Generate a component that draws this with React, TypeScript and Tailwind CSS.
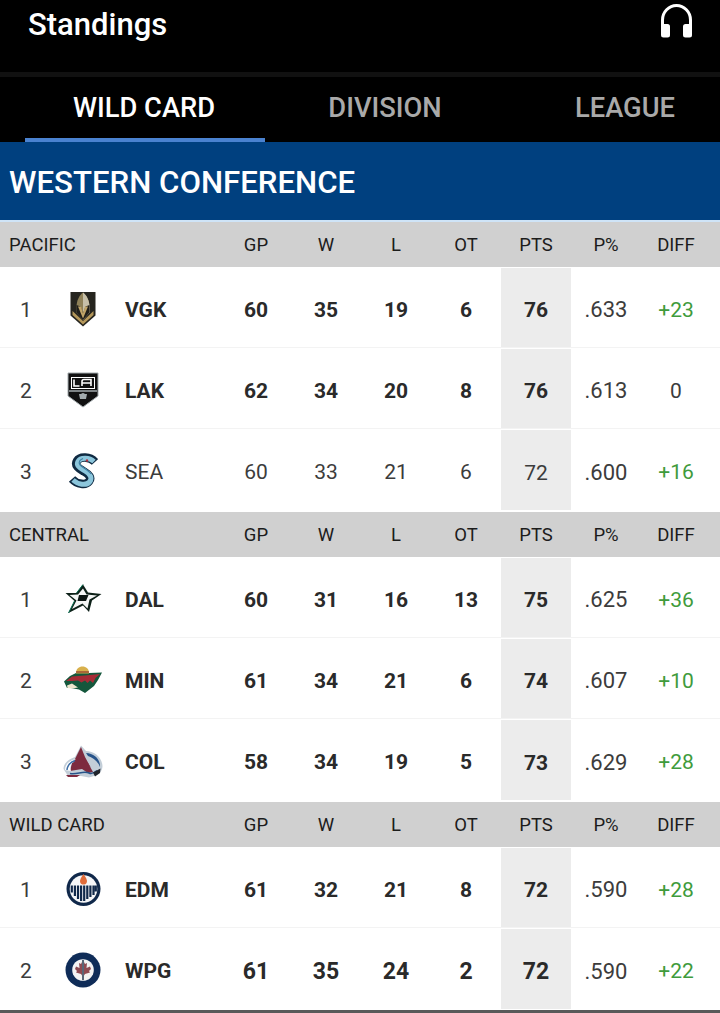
import React from "react";

const VGK = () => (
  <svg width="26" height="36" viewBox="0 0 26 36">
    <path d="M0.500 1H25.500V24.500L13 35.500 0.500 24.500Z" fill="#26251f" />
    <path d="M2.500 20V24L13 33.500 23.500 24V20L13 30Z" fill="#b4975a" />
    <path d="M13 1.500C9 4.500 6.500 10 6.500 16V21.500L13 29 19.500 21.500V16C19.500 10 17 4.500 13 1.500Z" fill="#8f8158" />
    <path d="M13 1.500C17 4.500 19.500 10 19.500 16V21.500L13 29Z" fill="#c6bfa8" />
    <path d="M6.500 14 10.500 15.500 13 22.500 15.500 15.500 19.500 14V21.500L13 29 6.500 21.500Z" fill="#1f1e1a" />
    <path d="M8 15.500H11L13 22.500 15 15.500H18L13 27.500Z" fill="#c0a468" />
  </svg>
);
const LAK = () => (
  <svg width="32" height="36" viewBox="0 0 32 36">
    <path d="M1 1H31V24L16 35 1 24Z" fill="#111" stroke="#a2aaad" strokeWidth="1" />
    <path d="M4 5H28V17H4Z" fill="#fff" />
    <path d="M5 6H27V16H5Z" fill="#111" />
    <path d="M7 7.500V14H12.500M15 14V9.500Q15 7.500 17 7.500H24V14M15 11H24" fill="none" stroke="#fff" strokeWidth="1.600" />
    <path d="M2 19H30" stroke="#a2aaad" strokeWidth="1.500" />
    <path d="M12 22H20L19 27H13Z" fill="#a2aaad" />
    <circle cx="16" cy="23" r="2" fill="#a2aaad" />
  </svg>
);
const SEA = () => (
  <svg width="30" height="37" viewBox="0 0 30 37">
    <path d="M27 9C22 3.500 12 3 9 8 6 13 12 16 16 18.500 21 21.500 24 24.500 21 28.500 18 32.500 9 31.500 4 26" fill="none" stroke="#0f2a42" strokeWidth="8.500" />
    <path d="M26 8.500C21.500 4.500 12.500 4 10 8.500 7.500 13 13 15.500 17 18 22 21 25 25 21.500 29 18 33 10 31.500 5 27" fill="none" stroke="#8cc6dc" strokeWidth="5" />
    <path d="M15 5.500C12 6.500 10 9 12 12 14 14.500 20 17 23 21" fill="none" stroke="#3d7fa3" strokeWidth="1.200" />
    <circle cx="19" cy="7.500" r="1.200" fill="#b3313f" />
  </svg>
);
const DAL = () => (
  <svg width="37" height="30" viewBox="0 0 37 30">
    <path d="M18 0.500 23 8.500 36.500 10 27 16.500 24 28 18 21.500 3.500 29 9.500 17 0.500 9 11.500 9Z" fill="#0d2018" />
    <path d="M18 4.500 21.500 10.500 32 11.500 24.500 15.500 22.500 24.500 17.500 19.500 7 25 11.500 16.500 4.500 11 13 10.500Z" fill="#f4f6f5" />
    <path d="M14 11H23.500L21 17H12.500Z" fill="#0b1512" />
    <path d="M3.500 29 9.500 17M18 0.500 11.500 9" stroke="#00684a" strokeWidth="1" />
  </svg>
);
const MIN = () => (
  <svg width="40" height="28" viewBox="0 0 40 28">
    <path d="M1 15.500 7 10 13 7H26L39 6.500 35 14 31 20 22 27 16 23.500 8 22 4 22Z" fill="#14573c" />
    <path d="M13 7.500C13 2.500 16 0.500 19.500 0.500 23 0.500 26 2.500 26 7.500Z" fill="#d8b04c" />
    <path d="M13 6H26" stroke="#8b3a2a" strokeWidth="1.200" />
    <path d="M3 15 9 10.500 22 9.500 37 8 32.500 12 30 17 27 14.500 24.500 17 22 14.500 18.500 16.500 15 14.500 9 15Z" fill="#a62b36" />
    <path d="M4 19.500 9 17.500 15 21.500 9 22.500 4.500 22Z" fill="#efe6ce" />
  </svg>
);
const COL = () => (
  <svg width="40" height="33" viewBox="0 0 40 33">
    <path d="M0.500 24C0.500 18 6 14 12 12L18 0.500 23 6C31 6 39 12 39.500 21 39.500 26 36 30 31 31L26 32.500 18 31 5 31Z" fill="#c3ced8" />
    <path d="M18 2 10 18 24 18 28 23 22 12Z" fill="#7d2b3f" />
    <path d="M9 18H25L30 27 25 28 19 24 7 26Z" fill="#7d2b3f" />
    <path d="M2 25C2 19 7 15 13 14 8 18 6.500 22 8 26Z" fill="#fff" />
    <path d="M4 25C4.500 20 8 17 12 15.500" stroke="#3e6fa6" strokeWidth="1.500" fill="none" />
    <path d="M23 8C31 8.500 37.500 14 37 22 35 16.500 30 12.500 25 11Z" fill="#27548a" />
    <path d="M7 28.500C14 30 20 25.500 26 28 28 29 30 29 34 25.500" stroke="#27548a" strokeWidth="1.500" fill="none" />
    <path d="M30 27.500 37.500 23.500 37 28 32 31.500Z" fill="#20242b" />
    <path d="M3 30H17L14 32H5Z" fill="#7d2b3f" />
  </svg>
);
const EDM = () => (
  <svg width="35" height="36" viewBox="0 0 35 36">
    <circle cx="17.500" cy="18" r="17" fill="#10284a" />
    <circle cx="17.500" cy="18" r="13.800" fill="#f5f6f8" />
    <path d="M17.500 3C14 8 13.500 10 14.500 12 15.500 14 19.500 14 20.500 12 21.500 10 21 8 17.500 3Z" fill="#e06c3a" />
    <path d="M5.800 14.500V21.500M8.900 14.500V25M12 14.500V28M15.100 14.500V30M18.200 14.500V30M21.300 14.500V28M24.400 14.500V26M27.500 14.500V24M29.800 14.500V20.500" stroke="#10284a" strokeWidth="2.200" />
  </svg>
);
const WPG = () => (
  <svg width="36" height="36" viewBox="0 0 36 36">
    <circle cx="18" cy="18" r="17.500" fill="#0f2c58" />
    <circle cx="18" cy="18" r="10.800" fill="#f3f3f3" />
    <path d="M18 8 20 12 22 11 21.500 16 25 14.500 26 17 24 19 25 20.500 20 22 19 23.500V28H17V23.500L16 22 11 20.500 12 19 10 17 11 14.500 14.500 16 14 11 16 12Z" fill="#8e4a52" />
    <path d="M18 8V28" stroke="#596677" strokeWidth="2" />
  </svg>
);

type Team = { rank: string; logo: React.ReactNode; abbr: string; gp: string; w: string; l: string; ot: string; pts: string; pct: string; diff: string; bold: boolean; big?: boolean };

const Row = ({ t }: { t: Team }) => {
  const tone = t.bold ? "font-bold text-[#2a2a2a]" : "font-normal text-[#3c3c3c]";
  const stat = `flex items-center justify-center pt-[7px] ${tone} ${t.big ? "text-[23px]" : "text-[21px]"}`;
  return (
    <div className="grid h-[81px] grid-cols-[221px_repeat(7,70px)] border-b border-[#f3f3f3] last:border-b-0">
      <div className="flex items-center">
        <span className="w-[52px] pt-[7px] text-center text-[21px] text-[#3c3c3c]">{t.rank}</span>
        <span className="flex w-[62px] items-center justify-center pt-[3px]">{t.logo}</span>
        <span className={`ml-[11px] pt-[7px] text-[21px] ${tone}`}>{t.abbr}</span>
      </div>
      <div className={stat}>{t.gp}</div>
      <div className={stat}>{t.w}</div>
      <div className={stat}>{t.l}</div>
      <div className={stat}>{t.ot}</div>
      <div className={`${stat} mt-px bg-[#ececec]`}>{t.pts}</div>
      <div className="flex items-center justify-center pt-[5px] text-[22px] text-[#3c3c3c]">{t.pct}</div>
      <div className={`flex items-center justify-center pt-[7px] text-[21px] ${t.diff === "0" ? "text-[#3c3c3c]" : "text-[#3f9b3c]"}`}>{t.diff}</div>
    </div>
  );
};

const Section = ({ name, teams }: { name: string; teams: Team[] }) => (
  <section className="pb-[2px]">
    <div className="grid h-[45px] grid-cols-[221px_repeat(7,70px)] items-center bg-[#d0d0d0] pt-[3px] text-[18.500px] text-[#1c1c1c]">
      <div className="pl-[9px]">{name}</div>
      {["GP", "W", "L", "OT", "PTS", "P%", "DIFF"].map((h) => (
        <div key={h} className="text-center">{h}</div>
      ))}
    </div>
    {teams.map((t) => (
      <Row key={t.abbr} t={t} />
    ))}
  </section>
);

const pacific: Team[] = [
  { rank: "1", logo: <VGK />, abbr: "VGK", gp: "60", w: "35", l: "19", ot: "6", pts: "76", pct: ".633", diff: "+23", bold: true },
  { rank: "2", logo: <LAK />, abbr: "LAK", gp: "62", w: "34", l: "20", ot: "8", pts: "76", pct: ".613", diff: "0", bold: true },
  { rank: "3", logo: <SEA />, abbr: "SEA", gp: "60", w: "33", l: "21", ot: "6", pts: "72", pct: ".600", diff: "+16", bold: false },
];
const central: Team[] = [
  { rank: "1", logo: <DAL />, abbr: "DAL", gp: "60", w: "31", l: "16", ot: "13", pts: "75", pct: ".625", diff: "+36", bold: true },
  { rank: "2", logo: <MIN />, abbr: "MIN", gp: "61", w: "34", l: "21", ot: "6", pts: "74", pct: ".607", diff: "+10", bold: true },
  { rank: "3", logo: <COL />, abbr: "COL", gp: "58", w: "34", l: "19", ot: "5", pts: "73", pct: ".629", diff: "+28", bold: true },
];
const wild: Team[] = [
  { rank: "1", logo: <EDM />, abbr: "EDM", gp: "61", w: "32", l: "21", ot: "8", pts: "72", pct: ".590", diff: "+28", bold: true },
  { rank: "2", logo: <WPG />, abbr: "WPG", gp: "61", w: "35", l: "24", ot: "2", pts: "72", pct: ".590", diff: "+22", bold: true, big: true },
];

export default function App() {
  return (
    <div className="flex h-[1013px] w-[720px] flex-col overflow-hidden bg-white font-['Roboto',sans-serif]">
      <header className="flex h-[72px] shrink-0 items-start justify-between bg-black pl-[28px] pr-[26px] pt-[5px]">
        <h1 className="text-[31px] font-medium leading-[40px] text-white">Standings</h1>
        <svg width="35" height="36" viewBox="0 0 35 36" className="-mt-[2px]">
          <path d="M3.500 25V17A14 14.500 0 0 1 31.500 17V25" fill="none" stroke="#fff" strokeWidth="3" />
          <rect x="2" y="21" width="9" height="13.500" rx="2.500" fill="#fff" />
          <rect x="24" y="21" width="9" height="13.500" rx="2.500" fill="#fff" />
        </svg>
      </header>
      <div className="h-[5px] shrink-0 bg-[#111111]" />
      <nav className="flex h-[65px] shrink-0 bg-black pl-[25px] text-[27.300px] font-medium">
        <div className="flex w-[240px] shrink-0 items-center justify-center border-b-[4px] border-[#4a82d0] pt-[2px] pr-[2px] text-white">WILD CARD</div>
        <div className="flex w-[240px] shrink-0 items-center justify-center pb-[2px] text-[#a9a9a9]">DIVISION</div>
        <div className="flex w-[240px] shrink-0 items-center justify-center pb-[2px] text-[#a9a9a9]">LEAGUE</div>
      </nav>
      <div className="flex h-[80px] shrink-0 items-center border-b-2 border-[#cfe4f7] bg-[#00407f] pl-[9px] pt-[4px] text-[31.200px] font-medium text-white">WESTERN CONFERENCE</div>
      <main className="shrink-0">
        <Section name="PACIFIC" teams={pacific} />
        <Section name="CENTRAL" teams={central} />
        <Section name="WILD CARD" teams={wild} />
      </main>
      <div className="-mt-px h-[3px] shrink-0 bg-[#595959]" />
    </div>
  );
}
